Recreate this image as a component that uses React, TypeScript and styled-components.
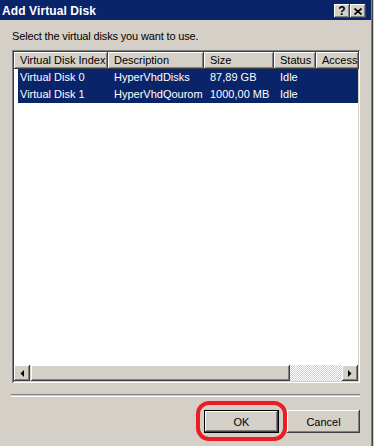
import React from "react";
import styled, { createGlobalStyle } from "styled-components";

const GlobalStyle = createGlobalStyle`
  html, body { margin: 0; padding: 0; background: #d4d0c8; }
  body {
    font-family: "Liberation Sans", Arial, sans-serif;
    font-size: 11px;
    color: #000;
  }
`;

const raised = `
  box-shadow: inset -1px -1px #404040, inset 1px 1px #ffffff,
    inset -2px -2px #808080, inset 2px 2px #d4d0c8;
`;

const Window = styled.div`
  width: 374px;
  height: 446px;
  background: #d4d0c8;
  display: flex;
  flex-direction: column;
  box-sizing: border-box;
  padding-right: 3px;
  box-shadow: inset -1px 0 #d4d0c8, inset -2px 0 #404040, inset -3px 0 #808080;
  overflow: hidden;
`;

const TitleBar = styled.div`
  height: 20px;
  background: #0a246a;
  display: flex;
  align-items: center;
  padding-left: 2px;
  padding-right: 5px;
`;

const Title = styled.span`
  flex: 1;
  color: #fff;
  font-weight: bold;
  font-size: 12px;
  font-family: "Liberation Sans", Arial, sans-serif;
  letter-spacing: 0.1px;
  padding-top: 1px;
`;

const CaptionButton = styled.div`
  width: 16px;
  height: 14px;
  margin-top: 2px;
  background: #d4d0c8;
  ${raised}
  display: flex;
  align-items: center;
  justify-content: center;
  font-weight: bold;
  font-size: 12px;
  line-height: 14px;
  color: #000;
`;

const Content = styled.div`
  flex: 1;
  display: flex;
  flex-direction: column;
  padding: 10px 11px 0 12px;
`;

const Prompt = styled.div`
  line-height: 13px;
  height: 13px;
  letter-spacing: -0.15px;
`;

const ListBox = styled.div`
  margin-top: 7px;
  height: 333px;
  box-sizing: border-box;
  padding: 2px;
  background: #fff;
  box-shadow: inset 1px 1px #808080, inset -1px -1px #ffffff,
    inset 2px 2px #404040, inset -2px -2px #d4d0c8;
  display: flex;
  flex-direction: column;
  overflow: hidden;
`;

const HeaderRow = styled.div`
  display: flex;
  height: 17px;
  flex-shrink: 0;
  background: #fff;
`;

const HeaderCell = styled.div<{ $w: number }>`
  width: ${(p) => p.$w}px;
  flex-shrink: 0;
  box-sizing: border-box;
  padding-left: 6px;
  line-height: 16px;
  white-space: nowrap;
  overflow: hidden;
  background: #d4d0c8;
  box-shadow: inset -1px -1px #404040, inset 1px 1px #ffffff,
    inset -2px -2px #808080;
`;

const Rows = styled.div`
  flex: 1;
`;

const Row = styled.div<{ $selected?: boolean }>`
  display: flex;
  height: 17px;
  margin-left: 4px;
  background: ${(p) => (p.$selected ? "#0a246a" : "transparent")};
  color: ${(p) => (p.$selected ? "#fff" : "#000")};
`;

const Cell = styled.div<{ $w: number; $first?: boolean }>`
  width: ${(p) => p.$w}px;
  flex-shrink: 0;
  box-sizing: border-box;
  padding-left: ${(p) => (p.$first ? 2 : 6)}px;
  line-height: 17px;
  white-space: nowrap;
  overflow: hidden;
`;

const ScrollBar = styled.div`
  height: 16px;
  display: flex;
  flex-shrink: 0;
  background: #d4d0c8;
`;

const ScrollArrow = styled.div`
  width: 16px;
  height: 16px;
  background: #d4d0c8;
  ${raised}
  display: flex;
  align-items: center;
  justify-content: center;
`;

const Thumb = styled.div<{ $w: number }>`
  width: ${(p) => p.$w}px;
  margin-left: 1px;
  height: 16px;
  background: #d4d0c8;
  ${raised}
`;

const Track = styled.div`
  flex: 1;
  background: repeating-conic-gradient(#ffffff 0 25%, #d4d0c8 0 50%) 0 0 / 2px 2px;
`;

const Separator = styled.div`
  margin-top: 11px;
  margin-left: -1px;
  height: 1px;
  border-top: 1px solid #808080;
  border-bottom: 1px solid #ffffff;
`;

const ButtonBar = styled.div`
  margin-top: 13px;
  display: flex;
  justify-content: flex-end;
  gap: 8px;
`;

const Highlight = styled.div`
  position: relative;
`;

const Ring = styled.div`
  position: absolute;
  top: -9px;
  left: -8px;
  right: -8px;
  bottom: -8px;
  border: 4px solid #ed1c24;
  border-radius: 13px;
  pointer-events: none;
`;

const Button = styled.button<{ $default?: boolean; $w: number }>`
  width: ${(p) => p.$w}px;
  height: 23px;
  padding: 0;
  border: ${(p) => (p.$default ? "1px solid #000" : "none")};
  background: #d4d0c8;
  font-family: inherit;
  font-size: 11px;
  color: #000;
  ${raised}
  display: block;
`;

const Arrow: React.FC<{ dir: "left" | "right" }> = ({ dir }) => (
  <svg width="4" height="7" viewBox="0 0 4 7">
    {dir === "left" ? (
      <polygon points="4,0 4,7 0.5,3.5" fill="#000" />
    ) : (
      <polygon points="0,0 0,7 3.5,3.5" fill="#000" />
    )}
  </svg>
);

const columns = [
  { title: "Virtual Disk Index", width: 94 },
  { title: "Description", width: 96 },
  { title: "Size", width: 70 },
  { title: "Status", width: 42 },
  { title: "Access", width: 43 },
];

const disks = [
  ["Virtual Disk 0", "HyperVhdDisks", "87,89 GB", "Idle", ""],
  ["Virtual Disk 1", "HyperVhdQourom", "1000,00 MB", "Idle", ""],
];

export default function App() {
  return (
    <>
      <GlobalStyle />
      <Window>
        <TitleBar>
          <Title>Add Virtual Disk</Title>
          <CaptionButton>?</CaptionButton>
          <CaptionButton>
            <svg width="8" height="7" viewBox="0 0 8 7">
              <path d="M0.5 0.5 L7.5 6.5 M7.5 0.5 L0.5 6.5" stroke="#000" strokeWidth="1.6" />
            </svg>
          </CaptionButton>
        </TitleBar>
        <Content>
          <Prompt>Select the virtual disks you want to use.</Prompt>
          <ListBox>
            <HeaderRow>
              {columns.map((c) => (
                <HeaderCell key={c.title} $w={c.width}>
                  {c.title}
                </HeaderCell>
              ))}
            </HeaderRow>
            <Rows>
              {disks.map((d) => (
                <Row key={d[0]} $selected>
                  {d.map((v, i) => (
                    <Cell key={i} $w={i === 0 ? columns[i].width - 4 : columns[i].width} $first={i === 0}>
                      {v}
                    </Cell>
                  ))}
                </Row>
              ))}
            </Rows>
            <ScrollBar>
              <ScrollArrow>
                <Arrow dir="left" />
              </ScrollArrow>
              <Thumb $w={259} />
              <Track />
              <ScrollArrow>
                <Arrow dir="right" />
              </ScrollArrow>
            </ScrollBar>
          </ListBox>
          <Separator />
          <ButtonBar>
            <Highlight>
              <Button $default $w={75}>OK</Button>
              <Ring />
            </Highlight>
            <Button $w={73}>Cancel</Button>
          </ButtonBar>
        </Content>
      </Window>
    </>
  );
}
